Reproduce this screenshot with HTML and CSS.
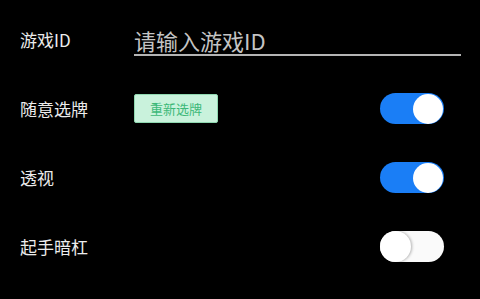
FILE: index.html
```html
<!DOCTYPE html>
<html lang="zh-CN">
  <head>
    <meta charset="UTF-8" />
    <meta name="viewport" content="width=device-width, initial-scale=1.0" />
    <title>设置</title>
    <link rel="stylesheet" href="styles.css">
  </head>
  <body>
    <div class="settings">
      <div class="row">
        <span class="label">游戏ID</span>
        <input type="text" class="idInput" placeholder="请输入游戏ID" />
      </div>
      <div class="row">
        <span class="label">随意选牌</span>
        <button class="pickBtn">重新选牌</button>
        <span class="switch on"><span class="knob"></span></span>
      </div>
      <div class="row">
        <span class="label">透视</span>
        <span class="switch on"><span class="knob"></span></span>
      </div>
      <div class="row">
        <span class="label">起手暗杠</span>
        <span class="switch"><span class="knob"></span></span>
      </div>
    </div>
  </body>
</html>
```

FILE: styles.css
```css
* {
  padding: 0;
  margin: 0;
  box-sizing: border-box;
  font-family: "Noto Sans CJK SC", "Noto Sans", sans-serif;
}
body {
  background-color: black;
  width: 480px;
  height: 299px;
  overflow: hidden;
}
.settings {
  padding: 5px 36px 0 20px;
}
.row {
  display: flex;
  align-items: center;
  height: 69px;
}
.label {
  width: 114px;
  flex-shrink: 0;
  font-size: 17px;
  color: #ececec;
}
.idInput {
  width: 327px;
  margin-right: -19px;
  margin-top: 2px;
  background: transparent;
  border: none;
  border-bottom: 2px solid #b4b4b4;
  color: #ddd;
  font-size: 22px;
  line-height: 28px;
  height: 30px;
  outline: none;
}
.idInput::placeholder {
  color: #c4c4c4;
}
.pickBtn {
  width: 84px;
  height: 29px;
  background-color: #c9f2dc;
  border: 1px solid #8fd8b0;
  border-radius: 2px;
  color: #3cb878;
  font-size: 13px;
  cursor: pointer;
}
.switch {
  margin-left: auto;
  width: 64px;
  height: 31px;
  border-radius: 16px;
  background-color: #fafafa;
  display: flex;
  align-items: center;
}
.switch .knob {
  width: 31px;
  height: 31px;
  border-radius: 50%;
  background-color: white;
  box-shadow: 1px 0 3px rgba(0, 0, 0, 0.3);
}
.switch.on {
  background-color: #1a7ef6;
  justify-content: flex-end;
  padding-right: 1px;
}
.switch.on .knob {
  width: 30px;
  height: 30px;
  box-shadow: none;
}
```
